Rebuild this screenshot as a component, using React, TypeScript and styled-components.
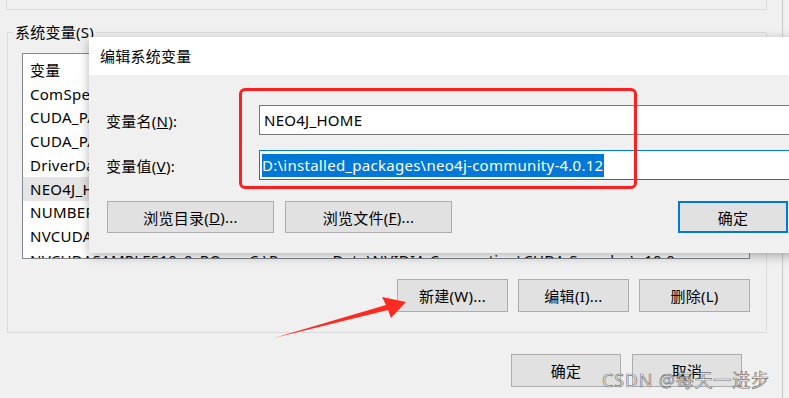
import React from 'react';
import styled, { createGlobalStyle } from 'styled-components';

const GlobalStyle = createGlobalStyle`
  html, body {
    margin: 0;
    padding: 0;
    background: #f0f0f0;
  }
  body {
    font-family: "Noto Sans", "Noto Sans CJK SC", sans-serif;
    font-size: 15px;
    letter-spacing: 0.27px;
    color: #000;
  }
  * {
    box-sizing: border-box;
  }
`;

const Screen = styled.div`
  position: relative;
  width: 789px;
  height: 398px;
  overflow: hidden;
  background: #f0f0f0;
`;

// fenêtre "Variables d'environnement" derrière le dialogue
const EnvWindow = styled.div`
  width: 783px;
  height: 398px;
  border-right: 1px solid #c8c8c8;
  display: flex;
  flex-direction: column;
`;

const UserGroupTail = styled.div`
  margin-left: 6px;
  width: 761px;
  height: 10px;
  border: 1px solid #dcdcdc;
  border-top: none;
`;

const GroupBox = styled.fieldset`
  margin: 12px 0 0 7px;
  width: 760px;
  padding: 11px 16px 20px 14px;
  border: 1px solid #dcdcdc;
  min-width: 0;
`;

const Legend = styled.legend`
  margin-left: -9px;
  padding: 0 2px;
  line-height: 20px;
  font-size: 15px;
`;

const ListBox = styled.div`
  width: 728px;
  height: 206px;
  border: 1px solid #828790;
  background: #fff;
  padding-top: 4px;
  overflow: hidden;
`;

const ListRow = styled.div<{ $selected?: boolean }>`
  display: grid;
  grid-template-columns: 219px 1fr;
  align-items: center;
  height: 23.75px;
  padding-left: 7px;
  white-space: nowrap;
  background: ${(p) => (p.$selected ? '#e5e5e5' : 'transparent')};
`;

const ButtonRow = styled.div<{ $top: number; $right?: number; $gap: number }>`
  display: flex;
  justify-content: flex-end;
  gap: ${(p) => p.$gap}px;
  margin-top: ${(p) => p.$top}px;
  padding-right: ${(p) => p.$right ?? 0}px;
`;

const PushButton = styled.div<{ $w: number; $h?: number; $default?: boolean }>`
  width: ${(p) => p.$w}px;
  height: ${(p) => p.$h ?? 33}px;
  display: flex;
  align-items: center;
  justify-content: center;
  background: #e1e1e1;
  border: ${(p) => (p.$default ? '2px solid #0078d7' : '1px solid #adadad')};
  font-size: 15px;
  white-space: nowrap;
`;

// dialogue "编辑系统变量" au premier plan
const Dialog = styled.div`
  position: absolute;
  left: 89px;
  top: 37px;
  width: 760px;
  height: 216px;
  background: #f0f0f0;
  box-shadow: 0 3px 10px rgba(0, 0, 0, 0.3);
  display: flex;
  flex-direction: column;
`;

const TitleBar = styled.div`
  height: 38px;
  background: #fff;
  padding-left: 11px;
  line-height: 38px;
  font-size: 15px;
`;

const DialogBody = styled.div`
  padding: 30px 0 0 17px;
`;

const FormRow = styled.div<{ $gap?: number }>`
  display: grid;
  grid-template-columns: 153px 580px;
  align-items: center;
  height: 30px;
  margin-top: ${(p) => p.$gap ?? 0}px;
`;

const Label = styled.span`
  font-size: 15px;
  white-space: nowrap;
`;

const TextField = styled.div<{ $focused?: boolean }>`
  height: 30px;
  background: #fff;
  border: 1px solid ${(p) => (p.$focused ? '#0078d7' : '#7a7a7a')};
  display: flex;
  align-items: center;
  padding-left: ${(p) => (p.$focused ? 2 : 4)}px;
  white-space: nowrap;
`;

const Selection = styled.span`
  background: #0078d7;
  color: #fff;
  line-height: 23px;
  padding-right: 1px;
`;

const DialogButtons = styled.div`
  width: 681px;
  margin: 21px 0 0 1px;
  display: flex;
  justify-content: space-between;
`;

const BrowseGroup = styled.div`
  display: flex;
  gap: 11px;
`;

const Callout = styled.div`
  position: absolute;
  left: 239px;
  top: 88px;
  width: 398px;
  height: 101px;
  border: 3px solid #ff1f1f;
  border-radius: 6px;
`;

const Arrow = styled.svg`
  position: absolute;
  left: 0;
  top: 0;
  pointer-events: none;
`;

const Watermark = styled.div`
  position: absolute;
  left: 602px;
  top: 366px;
  font-family: "Noto Sans", "Noto Sans CJK SC", sans-serif;
  font-size: 18px;
  letter-spacing: 0.8px;
  color: rgba(255, 255, 255, 0.8);
  -webkit-text-stroke: 0.7px rgba(85, 85, 85, 0.8);
  white-space: nowrap;
`;

const variables = [
  { name: 'ComSpec', value: 'C:\\WINDOWS\\system32\\cmd.exe' },
  { name: 'CUDA_PATH', value: 'C:\\Program Files\\NVIDIA GPU Computing Toolkit\\CUDA\\v10.0' },
  { name: 'CUDA_PATH_V10_0', value: 'C:\\Program Files\\NVIDIA GPU Computing Toolkit\\CUDA\\v10.0' },
  { name: 'DriverData', value: 'C:\\Windows\\System32\\Drivers\\DriverData' },
  { name: 'NEO4J_HOME', value: 'D:\\installed_packages\\neo4j-community-4.0.12', selected: true },
  { name: 'NUMBER_OF_PROCESSORS', value: '8' },
  { name: 'NVCUDASAMPLES_ROOT', value: 'C:\\ProgramData\\NVIDIA Corporation\\CUDA Samples\\v10.0' },
  { name: 'NVCUDASAMPLES10_0_RO...', value: 'C:\\ProgramData\\NVIDIA Corporation\\CUDA Samples\\v10.0' }
];

export default function App() {
  return (
    <>
      <GlobalStyle />
      <Screen>
        <EnvWindow>
          <UserGroupTail />
          <GroupBox>
            <Legend>系统变量(S)</Legend>
            <ListBox>
              <ListRow>
                <span>变量</span>
                <span>值</span>
              </ListRow>
              {variables.map((v) => (
                <ListRow key={v.name} $selected={v.selected}>
                  <span>{v.name}</span>
                  <span>{v.value}</span>
                </ListRow>
              ))}
            </ListBox>
            <ButtonRow $top={20} $gap={10}>
              <PushButton $w={111}>新建(W)...</PushButton>
              <PushButton $w={111}>编辑(I)...</PushButton>
              <PushButton $w={111}>删除(L)</PushButton>
            </ButtonRow>
          </GroupBox>
          <ButtonRow $top={21} $right={40} $gap={11}>
            <PushButton $w={110}>确定</PushButton>
            <PushButton $w={110}>取消</PushButton>
          </ButtonRow>
        </EnvWindow>

        <Dialog>
          <TitleBar>编辑系统变量</TitleBar>
          <DialogBody>
            <FormRow>
              <Label>变量名(<u>N</u>):</Label>
              <TextField>NEO4J_HOME</TextField>
            </FormRow>
            <FormRow $gap={15}>
              <Label>变量值(<u>V</u>):</Label>
              <TextField $focused>
                <Selection>D:\installed_packages\neo4j-community-4.0.12</Selection>
              </TextField>
            </FormRow>
            <DialogButtons>
              <BrowseGroup>
                <PushButton $w={167} $h={32}>浏览目录(<u>D</u>)...</PushButton>
                <PushButton $w={167} $h={32}>浏览文件(<u>F</u>)...</PushButton>
              </BrowseGroup>
              <PushButton $w={110} $h={32} $default>确定</PushButton>
            </DialogButtons>
          </DialogBody>
        </Dialog>

        <Callout />

        <Arrow width="789" height="398" viewBox="0 0 789 398">
          <polygon
            points="274,338 386,305 382,297 406,302 391,318 388,310"
            fill="#ff2a1f"
          />
        </Arrow>

        <Watermark>CSDN @每天一进步</Watermark>
      </Screen>
    </>
  );
}
